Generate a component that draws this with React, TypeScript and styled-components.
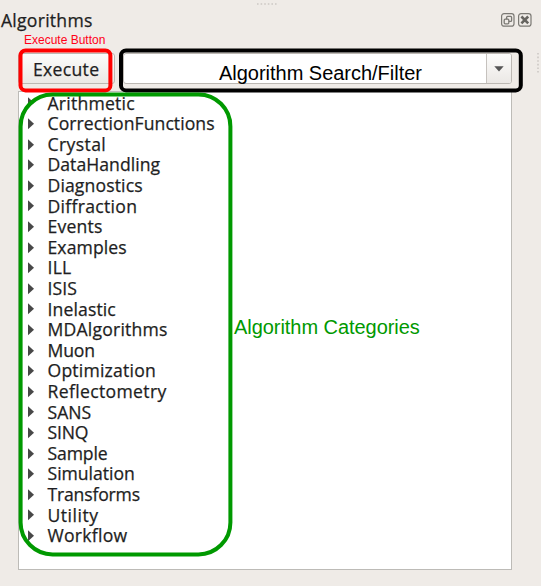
import React from 'react';
import styled, { createGlobalStyle } from 'styled-components';

const GlobalStyle = createGlobalStyle`
  body { margin: 0; background: #fff; }
  * { box-sizing: border-box; }
`;

const Dock = styled.main`
  position: relative;
  display: flex;
  flex-direction: column;
  width: 541px;
  height: 586px;
  padding: 0 29px 16px 18px;
  background: #efebe7;
  color: #1e1e22;
  font: 17.6px/20px 'Open Sans', 'Noto Sans', sans-serif;
  overflow: hidden;
`;

const TitleBar = styled.header`
  display: flex;
  align-items: center;
  justify-content: space-between;
  flex: none;
  height: 40px;
  margin: 0 -20px 0 -17px;
`;

const Spaced = styled.span<{ $gap: number }>`
  letter-spacing: ${(p) => p.$gap}px;
  -webkit-text-stroke: 0.25px currentColor;
  white-space: nowrap;
`;

const WindowButtons = styled.div`
  display: flex;
  gap: 3px;
`;

const WindowButton = styled.button`
  display: block;
  width: 14px;
  height: 14px;
  padding: 0;
  border: 0;
  background: none;
  svg { display: block; }
`;

const Toolbar = styled.div`
  display: flex;
  flex: none;
  gap: 8px;
  height: 51px;
  padding-top: 13px;
`;

const ExecuteButton = styled.button`
  width: 97px;
  height: 31px;
  padding: 0 0 0 14px;
  border: 1px solid #bcb8b3;
  border-radius: 3px;
  background: linear-gradient(#fcfcfb, #ebe8e5);
  color: inherit;
  font: inherit;
  text-align: left;
`;

const SearchBox = styled.div`
  display: flex;
  flex: 1;
  height: 31px;
  border: 1px solid #bcb8b3;
  border-radius: 3px;
  background: #fff;
`;

const SearchText = styled.div`
  flex: 1;
  padding-left: 95px;
  color: #000;
  font: 20px/38px 'Liberation Sans', Arial, sans-serif;
  letter-spacing: -0.02px;
  white-space: nowrap;
`;

const DropButton = styled.div`
  display: flex;
  align-items: center;
  justify-content: center;
  width: 25px;
  border-left: 1px solid #c6c2be;
  border-radius: 0 2px 2px 0;
  background: linear-gradient(#fcfcfb, #ebe8e5);
`;

const TreePanel = styled.section`
  display: flex;
  align-items: center;
  flex: 1;
  border: 1px solid #bdbbb7;
  background: #fff;
`;

const Tree = styled.ul`
  align-self: flex-start;
  width: 215px;
  margin: 0;
  padding: 1px 0 0 9px;
  list-style: none;
`;

const TreeRow = styled.li`
  display: flex;
  align-items: center;
  gap: 13.5px;
  height: 20.62px;
  svg { flex: none; }
`;

const CategoryName = styled(Spaced)`
  margin-bottom: 1.6px;
`;

const CategoryNote = styled.div`
  margin-top: -8px;
  color: #009900;
  font: 20px/24px 'Liberation Sans', Arial, sans-serif;
  letter-spacing: -0.05px;
`;

const ExecuteNote = styled.div`
  position: absolute;
  left: 24px;
  top: 33px;
  color: #ff0018;
  font: 12px/14px 'Liberation Sans', Arial, sans-serif;
`;

const Overlay = styled.svg`
  position: absolute;
  inset: 0;
  pointer-events: none;
`;

const categories: [string, number][] = [
  ['Arithmetic', 0.22],
  ['CorrectionFunctions', 0.06],
  ['Crystal', 0.38],
  ['DataHandling', 0.04],
  ['Diagnostics', 0.13],
  ['Diffraction', 0.3],
  ['Events', 0.2],
  ['Examples', 0.09],
  ['ILL', 0.22],
  ['ISIS', 0.09],
  ['Inelastic', 0.12],
  ['MDAlgorithms', 0.2],
  ['Muon', -0.15],
  ['Optimization', 0.2],
  ['Reflectometry', 0.34],
  ['SANS', 0.01],
  ['SINQ', -0.16],
  ['Sample', -0.12],
  ['Simulation', -0.02],
  ['Transforms', -0.18],
  ['Utility', 0.5],
  ['Workflow', 0.27],
];

const Expander = () => (
  <svg width="6" height="12" viewBox="0 0 6 12">
    <path d="M0 0.3L6 5.8L0 11.3Z" fill="#484848" />
  </svg>
);

const FloatIcon = () => (
  <svg width="14" height="14" viewBox="0 0 14 14" fill="none" stroke="#7b7974">
    <rect x="0.6" y="0.6" width="12.4" height="12.6" rx="2.5" strokeWidth="1.2" />
    <rect x="5.6" y="3.4" width="5" height="5" rx="1" strokeWidth="1.3" />
    <rect x="3.2" y="6.2" width="4.6" height="4.6" rx="1" strokeWidth="1.3" fill="#efebe7" />
  </svg>
);

const CloseIcon = () => (
  <svg width="14" height="14" viewBox="0 0 14 14" fill="none" stroke="#7b7974">
    <rect x="0.6" y="0.6" width="12.4" height="12.6" rx="2.5" strokeWidth="1.2" />
    <path d="M3.4 3.5L10.2 10.3M10.2 3.5L3.4 10.3" stroke="#666460" strokeWidth="2.6" />
  </svg>
);

export default function App() {
  return (
    <>
      <GlobalStyle />
      <Dock>
        <TitleBar>
          <Spaced $gap={0.25}>Algorithms</Spaced>
          <WindowButtons>
            <WindowButton aria-label="Float"><FloatIcon /></WindowButton>
            <WindowButton aria-label="Close"><CloseIcon /></WindowButton>
          </WindowButtons>
        </TitleBar>
        <Toolbar>
          <ExecuteButton><Spaced $gap={0.3}>Execute</Spaced></ExecuteButton>
          <SearchBox>
            <SearchText>Algorithm Search/Filter</SearchText>
            <DropButton>
              <svg width="10" height="6" viewBox="0 0 10 6">
                <path d="M0.3 0.3H9.7L5 5.5Z" fill="#555" />
              </svg>
            </DropButton>
          </SearchBox>
        </Toolbar>
        <TreePanel>
          <Tree>
            {categories.map(([name, gap]) => (
              <TreeRow key={name}>
                <Expander />
                <CategoryName $gap={gap}>{name}</CategoryName>
              </TreeRow>
            ))}
          </Tree>
          <CategoryNote>Algorithm Categories</CategoryNote>
        </TreePanel>
        <ExecuteNote>Execute Button</ExecuteNote>
        <Overlay width="541" height="586" fill="none" strokeWidth="4">
          <path d="M257 4H277" stroke="#cdc9c5" strokeWidth="1.5" strokeDasharray="1.6 2" />
          <path d="M538 53V74" stroke="#cdc9c5" strokeWidth="1.6" strokeDasharray="1.6 2" />
          <rect x="20.5" y="50.4" width="89.9" height="40" rx="5" stroke="#ff0000" />
          <rect x="121" y="50.4" width="399.8" height="40" rx="5" stroke="#000" />
          <rect x="20.6" y="94.4" width="209.8" height="460" rx="32" stroke="#009900" />
        </Overlay>
      </Dock>
    </>
  );
}
